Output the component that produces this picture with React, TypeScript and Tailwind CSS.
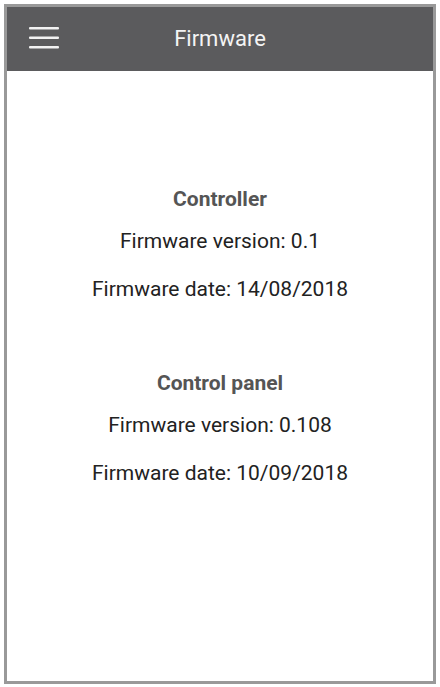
import React from "react";

const sections = [
  { title: "Controller", version: "0.1", date: "14/08/2018" },
  { title: "Control panel", version: "0.108", date: "10/09/2018" },
];

function Hamburger() {
  return (
    <svg width="30" height="22" viewBox="0 0 30 22" className="block">
      <rect x="0" y="0" width="30" height="2.6" rx="1" fill="#f2f2f2" />
      <rect x="0" y="9.5" width="30" height="2.6" rx="1" fill="#f2f2f2" />
      <rect x="0" y="19" width="30" height="2.6" rx="1" fill="#f2f2f2" />
    </svg>
  );
}

export default function App() {
  return (
    <div
      className="w-[440px] h-[687px] bg-white p-1"
      style={{ fontFamily: "Roboto, 'Liberation Sans', sans-serif" }}
    >
      <div className="h-[680px] border-[3px] border-[#999999] flex flex-col">
        {/* app bar */}
        <div className="relative h-[64px] bg-[#5b5b5d] flex items-center justify-center">
          <div className="absolute left-[22px] top-[20px]">
            <Hamburger />
          </div>
          <span className="text-[22px] text-[#f4f4f4] -mt-[2px]">Firmware</span>
        </div>

        {/* content */}
        <div className="flex flex-col items-center pt-[114px] gap-[66px]">
          {sections.map((s) => (
            <div key={s.title} className="flex flex-col items-center">
              <h2 className="text-[21px] font-bold text-[#555555] leading-[28px]">
                {s.title}
              </h2>
              <p className="mt-[14px] text-[21px] text-[#222222] leading-[28px]">
                Firmware version: {s.version}
              </p>
              <p className="mt-[20px] text-[21px] text-[#222222] leading-[28px]">
                Firmware date: {s.date}
              </p>
            </div>
          ))}
        </div>
      </div>
    </div>
  );
}
